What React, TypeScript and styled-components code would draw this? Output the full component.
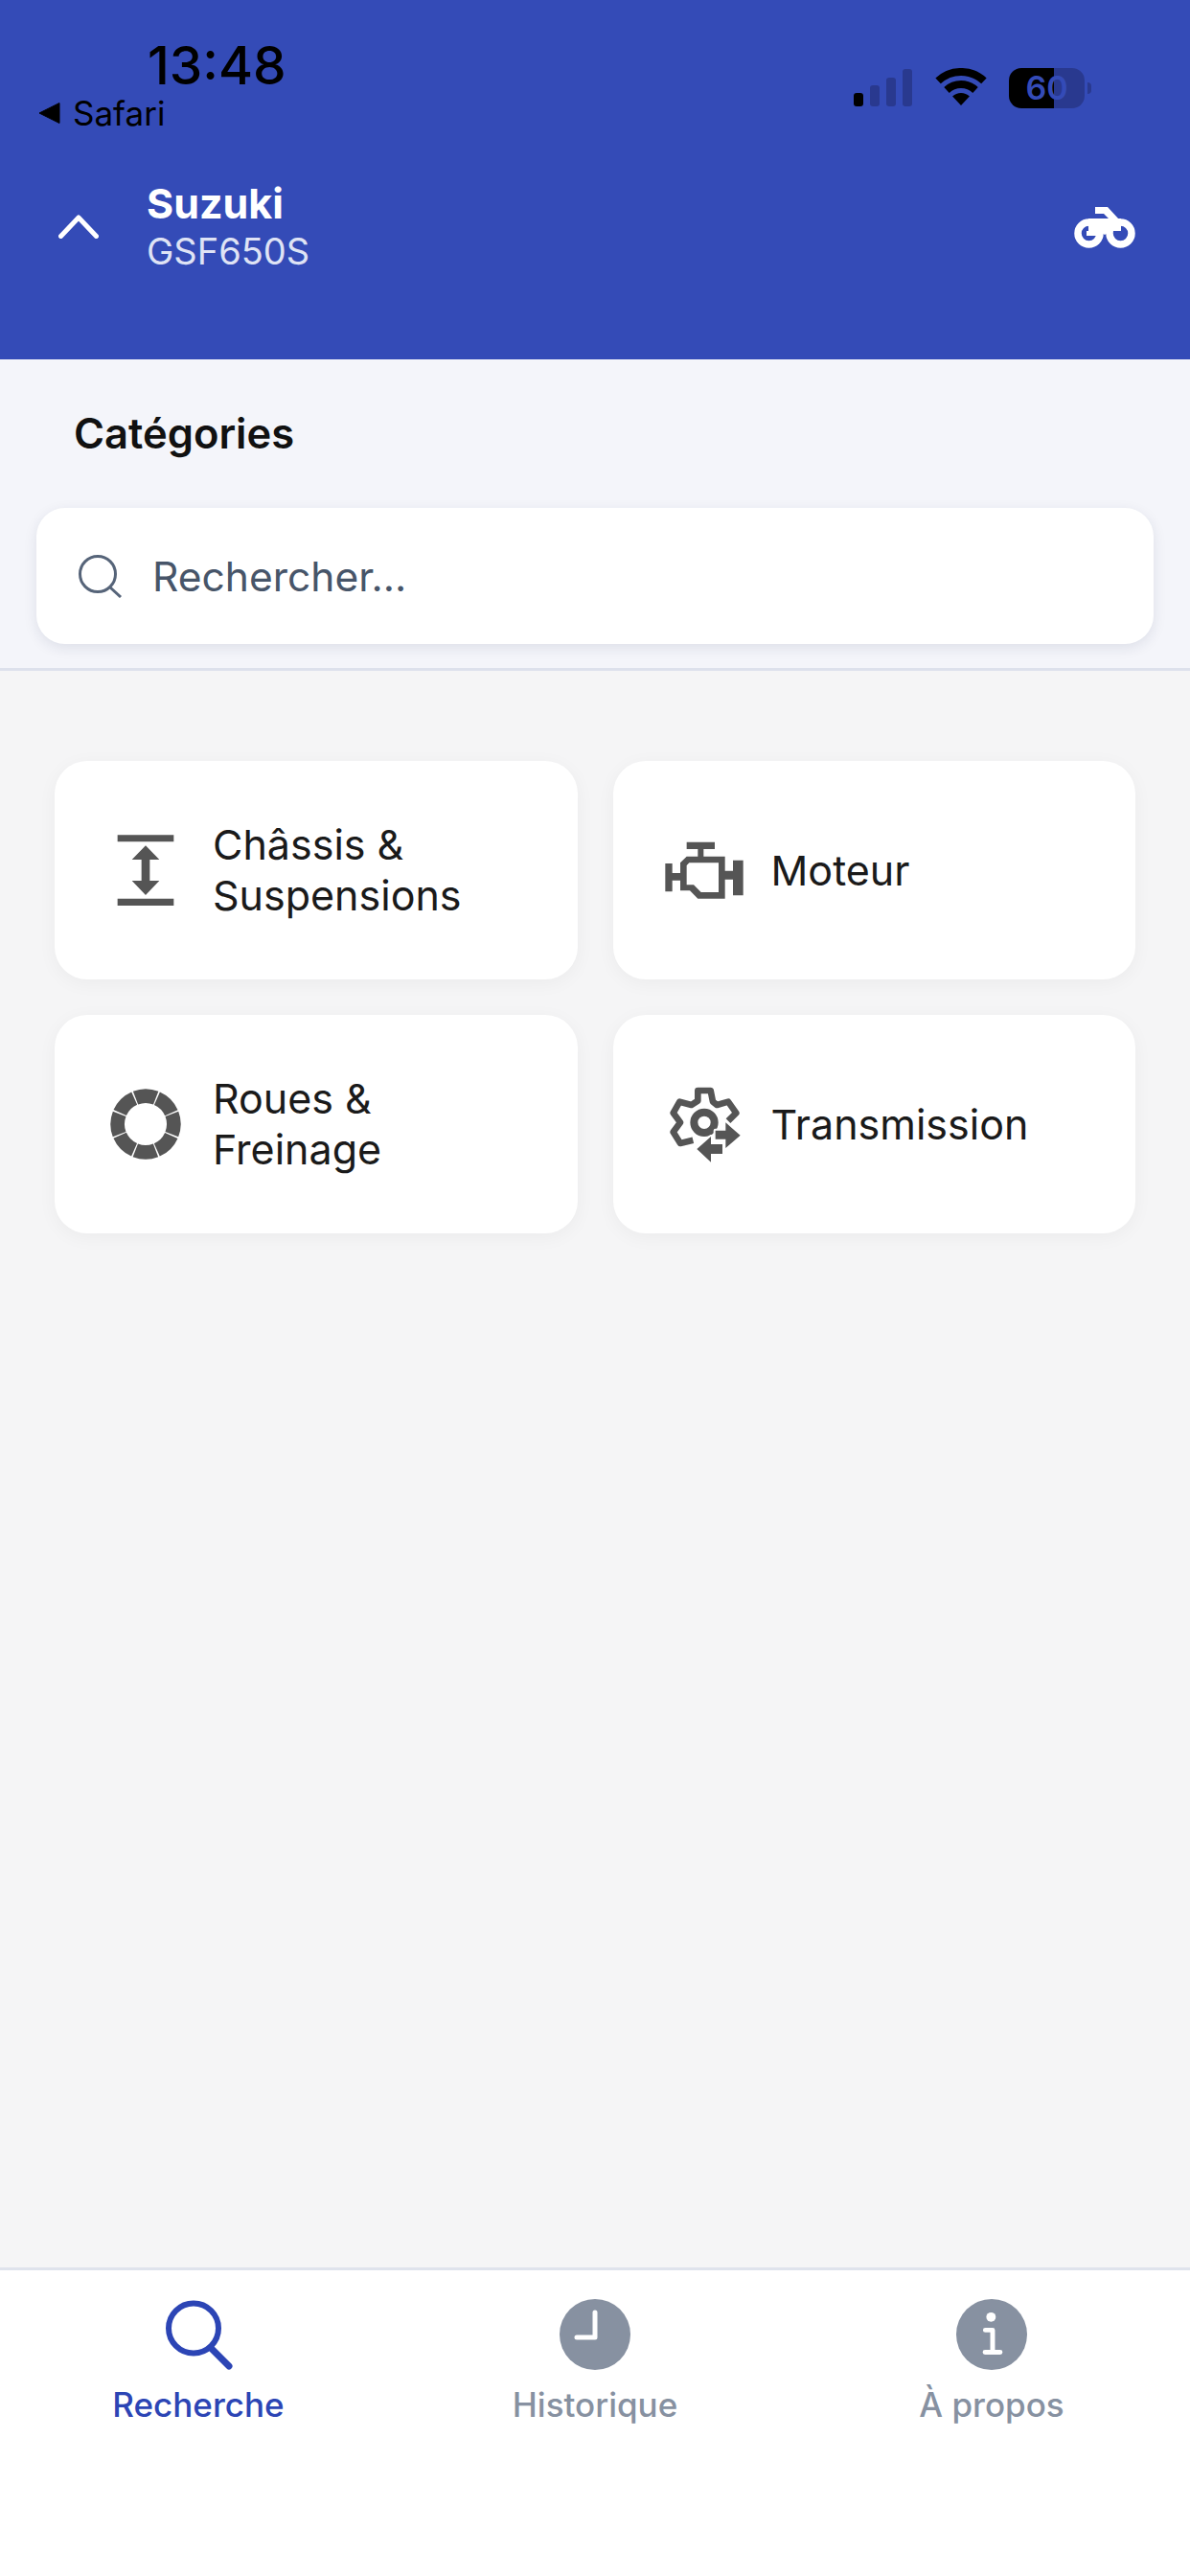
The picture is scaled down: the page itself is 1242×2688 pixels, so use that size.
import React from 'react'
import styled, { createGlobalStyle } from 'styled-components'

const GlobalStyle = createGlobalStyle`
    html, body {
        margin:0;
        padding:0;
        background:#f5f5f6;
        font-family:"Inter","Liberation Sans",sans-serif;
    }
    * {
        box-sizing:border-box;
    }
`

const Page = styled.div`
    width:1242px;
    height:2688px;
    display:flex;
    flex-direction:column;
    overflow:hidden;
`
const Header = styled.header`
    height:375px;
    background-color:#344bb7;
    flex-shrink:0;
`
const StatusBar = styled.div`
    height:190px;
    padding:40px 103px 0 40px;
    display:flex;
    justify-content:space-between;
    align-items:flex-start;
`
const StatusLeft = styled.div`
    display:flex;
    flex-direction:column;
`
const Time = styled.div`
    margin-left:114px;
    font-size:55px;
    line-height:56px;
    font-weight:500;
    color:#000;
`
const BackRow = styled.div`
    margin-top:2px;
    display:flex;
    align-items:center;
    gap:13px;
    font-size:35px;
    line-height:40px;
    color:#000;
`
const StatusRight = styled.div`
    margin-top:31px;
    display:flex;
    align-items:flex-start;
`
const SignalBars = styled.div`
    height:39px;
    margin-top:1px;
    display:flex;
    align-items:flex-end;
    gap:7px;
`
const SignalBar = styled.div<{ $h: number; $on?: boolean }>`
    width:10px;
    height:${p => p.$h}px;
    border-radius:3px;
    background-color:${p => (p.$on ? '#000' : '#29398f')};
`
const Wifi = styled.svg`
    width:54px;
    height:40px;
    margin-left:24px;
`
const Battery = styled.div`
    width:79px;
    height:42px;
    margin-left:23px;
    border-radius:13px;
    background:linear-gradient(90deg,#000 0,#000 47px,#29398f 47px);
    color:#344bb7;
    font-size:34px;
    font-weight:600;
    line-height:42px;
    text-align:center;
`
const BatteryNub = styled.div`
    width:4px;
    height:12px;
    margin:15px 0 0 3px;
    border-radius:0 4px 4px 0;
    background-color:#29398f;
`
const NavRow = styled.div`
    padding:0 57px 0 61px;
    display:flex;
    align-items:center;
`
const Titles = styled.div`
    margin-left:50px;
    flex:1;
`
const Brand = styled.div`
    margin-top:-3px;
    font-size:43px;
    line-height:50px;
    font-weight:700;
    color:#fff;
`
const Model = styled.div`
    margin-top:4px;
    font-size:38px;
    line-height:42px;
    color:#dfe3f5;
`
const SearchSection = styled.section`
    height:325px;
    flex-shrink:0;
    padding:0 38px;
    background-color:#f4f5fa;
    border-bottom:3px solid #dde1ec;
`
const SectionTitle = styled.h2`
    margin:0;
    padding:52px 0 0 39px;
    height:155px;
    font-size:43.5px;
    line-height:50px;
    font-weight:600;
    color:#111;
`
const SearchBox = styled.div`
    height:142px;
    padding-left:43px;
    display:flex;
    align-items:center;
    gap:32px;
    background-color:#fff;
    border-radius:30px;
    box-shadow:0 4px 14px rgba(30,40,80,.1);
`
const Placeholder = styled.span`
    font-size:42.5px;
    color:#475569;
`
const Main = styled.main`
    flex:1;
    padding:94px 57px 0;
`
const CategoryGrid = styled.div`
    display:grid;
    grid-template-columns:1fr 1fr;
    gap:37px;
`
const Card = styled.div`
    height:228px;
    padding-left:45px;
    display:flex;
    align-items:center;
    background-color:#fff;
    border-radius:34px;
    box-shadow:0 4px 20px rgba(0,0,0,.045);
`
const CardIcon = styled.svg`
    width:100px;
    height:100px;
    margin-right:20px;
    flex-shrink:0;
    fill:#555;
`
const CardLabel = styled.div`
    font-size:43px;
    line-height:53px;
    color:#1a1a1a;
`
const TabBar = styled.nav`
    height:322px;
    flex-shrink:0;
    padding-top:30px;
    display:grid;
    grid-template-columns:repeat(3,1fr);
    background-color:#fff;
    border-top:3px solid #dfe3ec;
`
const Tab = styled.div<{ $active?: boolean }>`
    display:flex;
    flex-direction:column;
    align-items:center;
    color:${p => (p.$active ? '#2c45b5' : '#8791a1')};
`
const TabIcon = styled.svg`
    width:74px;
    height:74px;
`
const TabLabel = styled.div`
    margin-top:15px;
    font-size:35px;
    line-height:42px;
    font-weight:500;
`

const categories = [
    {
        label: <>Châssis &amp;<br />Suspensions</>,
        icon: (
            <CardIcon viewBox="65 57 300 300">
                <path d="M127 97H303V118H127ZM127 296H303V318H127Z" />
                <path d="M215 130L258 174H228V240H258L215 285L172 240H202V174H172Z" />
            </CardIcon>
        ),
    },
    {
        label: <>Moteur</>,
        icon: (
            <CardIcon viewBox="45 -4 300 300">
                <path d="M140 58H228V80H193V103H260V148H285V115H317V225H285V175H260V235H175L150 210H120V178H95V213H73V125H95V155H120V123L140 103H175V80H140Z" />
                <path fill="#fff" d="M148 123H240V215H185L162 192H140V131Z" />
            </CardIcon>
        ),
    },
    {
        label: <>Roues &amp;<br />Freinage</>,
        icon: (
            <CardIcon viewBox="65 40 300 300">
                <circle
                    cx="215"
                    cy="190"
                    r="88"
                    fill="none"
                    stroke="#555"
                    strokeWidth="44"
                    pathLength={800}
                    strokeDasharray="94 6"
                    transform="rotate(24 215 190)"
                />
            </CardIcon>
        ),
    },
    {
        label: <>Transmission</>,
        icon: (
            <CardIcon viewBox="15 15 300 300">
                <path
                    d="M130 215L90 225L68 190L90 160L68 130L88 95L125 105L145 92V60H185L192 95L205 105L240 95L265 130L240 155"
                    fill="none"
                    stroke="#555"
                    strokeWidth="20"
                    strokeLinejoin="round"
                />
                <circle cx="165" cy="160" r="32" fill="none" stroke="#555" strokeWidth="24" />
                <path
                    d="M200 185H232V160L278 200L232 240V212H200ZM186 228H222V258H186V284L142 243L186 204Z"
                    stroke="#fff"
                    strokeWidth="12"
                    paintOrder="stroke"
                    strokeLinejoin="round"
                />
            </CardIcon>
        ),
    },
]

const App = () => {
    return (
        <Page>
            <GlobalStyle />
            <Header>
                <StatusBar>
                    <StatusLeft>
                        <Time>13:48</Time>
                        <BackRow>
                            <svg width="23" height="24" viewBox="0 0 23 24">
                                <path d="M22 1.5V22.5L1 12Z" fill="#000" stroke="#000" strokeLinejoin="round" />
                            </svg>
                            Safari
                        </BackRow>
                    </StatusLeft>
                    <StatusRight>
                        <SignalBars>
                            <SignalBar $h={14} $on />
                            <SignalBar $h={22} />
                            <SignalBar $h={30} />
                            <SignalBar $h={39} />
                        </SignalBars>
                        <Wifi viewBox="0 0 54 40">
                            <path d="M3.1 13.4A35 35 0 0 1 50.9 13.4" fill="none" stroke="#000" strokeWidth="8" />
                            <path d="M12 23A22 22 0 0 1 42 23" fill="none" stroke="#000" strokeWidth="8" />
                            <path d="M27 39L18.1 29.5A13 13 0 0 1 35.9 29.5Z" fill="#000" />
                        </Wifi>
                        <Battery>60</Battery>
                        <BatteryNub />
                    </StatusRight>
                </StatusBar>
                <NavRow>
                    <svg width="42" height="25" viewBox="0 0 42 25">
                        <path d="M2.5 22.5L21 3L39.5 22.5" fill="none" stroke="#fff" strokeWidth="5" strokeLinecap="round" strokeLinejoin="round" />
                    </svg>
                    <Titles>
                        <Brand>Suzuki</Brand>
                        <Model>GSF650S</Model>
                    </Titles>
                    <svg width="64" height="44" viewBox="0 0 64 44">
                        <path d="M22 1H35L47 14H37L31 8H22Z" fill="#fff" />
                        <path d="M15 13H49V26H38L32 30L26 26H15Z" fill="#fff" />
                        <circle cx="15.5" cy="28.5" r="11.5" fill="none" stroke="#fff" strokeWidth="7.5" />
                        <circle cx="48.5" cy="28.5" r="11.5" fill="none" stroke="#fff" strokeWidth="7.5" />
                        <path d="M13 26H24V31H13Z" fill="#fff" />
                    </svg>
                </NavRow>
            </Header>
            <SearchSection>
                <SectionTitle>Catégories</SectionTitle>
                <SearchBox>
                    <svg width="46" height="46" viewBox="0 0 46 46">
                        <circle cx="21" cy="21" r="18.5" fill="none" stroke="#566479" strokeWidth="3" />
                        <path d="M34 35L45 45" stroke="#566479" strokeWidth="3" />
                    </svg>
                    <Placeholder>Rechercher...</Placeholder>
                </SearchBox>
            </SearchSection>
            <Main>
                <CategoryGrid>
                    {categories.map((c, index) => (
                        <Card key={index}>
                            {c.icon}
                            <CardLabel>{c.label}</CardLabel>
                        </Card>
                    ))}
                </CategoryGrid>
            </Main>
            <TabBar>
                <Tab $active>
                    <TabIcon viewBox="0 0 74 74">
                        <circle cx="32" cy="30.5" r="26" fill="none" stroke="#2c45b5" strokeWidth="6" />
                        <path d="M50 51L69 70" stroke="#2c45b5" strokeWidth="7" strokeLinecap="round" />
                    </TabIcon>
                    <TabLabel>Recherche</TabLabel>
                </Tab>
                <Tab>
                    <TabIcon viewBox="0 0 74 74">
                        <circle cx="37" cy="37" r="37" fill="#8791a1" />
                        <path d="M37 14V40H18" fill="none" stroke="#fff" strokeWidth="5" strokeLinecap="round" strokeLinejoin="round" />
                    </TabIcon>
                    <TabLabel>Historique</TabLabel>
                </Tab>
                <Tab>
                    <TabIcon viewBox="293 150 224 224">
                        <circle cx="405" cy="262" r="112" fill="#8791a1" />
                        <circle cx="403" cy="207" r="15" fill="#fff" />
                        <path d="M385 248H408V318M384 318H432" fill="none" stroke="#fff" strokeWidth="15" strokeLinecap="round" strokeLinejoin="round" />
                    </TabIcon>
                    <TabLabel>À propos</TabLabel>
                </Tab>
            </TabBar>
        </Page>
    )
}

export default App
